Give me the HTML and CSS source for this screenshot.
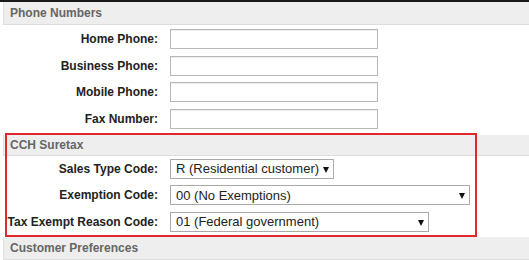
FILE: index.html
```html
<!DOCTYPE html>
<html>
<head>
<meta charset="utf-8">
<link rel="stylesheet" href="styles.css">
</head>
<body>
<div class="page">
  <section class="section">
    <div class="section-head">Phone Numbers</div>
    <div class="rows">
      <label class="label">Home Phone:</label><input class="text-input" type="text">
      <label class="label">Business Phone:</label><input class="text-input" type="text">
      <label class="label">Mobile Phone:</label><input class="text-input" type="text">
      <label class="label">Fax Number:</label><input class="text-input" type="text">
    </div>
  </section>
  <section class="section highlight">
    <div class="section-head compact">CCH Suretax</div>
    <div class="rows rows-select">
      <label class="label">Sales Type Code:</label>
      <span class="select-wrap w-sales"><select class="select"><option>R (Residential customer)</option></select></span>
      <label class="label">Exemption Code:</label>
      <span class="select-wrap w-exempt"><select class="select"><option>00 (No Exemptions)</option></select></span>
      <label class="label">Tax Exempt Reason Code:</label>
      <span class="select-wrap w-reason"><select class="select"><option>01 (Federal government)</option></select></span>
    </div>
  </section>
  <section class="section">
    <div class="section-head">Customer Preferences</div>
  </section>
</div>
</body>
</html>
```

FILE: styles.css
```css
html, body {
  margin: 0;
  background: #fff;
}
body {
  font-family: "Liberation Sans", Arial, sans-serif;
  width: 529px;
  height: 260px;
  overflow: hidden;
}
.page {
  border-top: 2px solid #1a1a1a;
  padding-left: 3px;
}
.section {
  position: relative;
}
.section-head {
  height: 22px;
  line-height: 22px;
  background: #eeeeee;
  border-bottom: 1px solid #dcdcdc;
  border-left: 1px solid #e2e2e2;
  padding-left: 6px;
  font-weight: bold;
  font-size: 12px;
  color: #666;
}
.section-head.compact {
  height: 20px;
  line-height: 20px;
}
.rows {
  display: grid;
  grid-template-columns: 155px auto;
  column-gap: 12px;
  row-gap: 6.5px;
  align-items: center;
  justify-items: start;
  padding: 4px 0 6px;
}
.rows-select {
  padding: 3px 0 5px;
}
.label {
  justify-self: end;
  font-weight: bold;
  font-size: 12px;
  color: #222;
}
.text-input {
  box-sizing: border-box;
  width: 208px;
  height: 20px;
  margin: 0;
  border: 1px solid #b8b8b8;
  box-shadow: inset 0 1px 1px rgba(0,0,0,0.08);
  background: #fff;
  padding: 0 4px;
}
.select-wrap {
  position: relative;
  display: block;
  height: 20px;
}
.select-wrap::after {
  content: "";
  position: absolute;
  right: 5px;
  top: 8px;
  border-left: 3.5px solid transparent;
  border-right: 3.5px solid transparent;
  border-top: 6px solid #111;
  pointer-events: none;
}
.select {
  -webkit-appearance: none;
  appearance: none;
  box-sizing: border-box;
  width: 100%;
  height: 20px;
  margin: 0;
  border: 1px solid #aaa;
  border-radius: 0;
  background: #fff;
  padding: 0 0 0 5px;
  font-family: "Liberation Sans", Arial, sans-serif;
  font-size: 13px;
  color: #222;
}
.w-sales { width: 164px; }
.w-exempt { width: 300px; }
.w-reason { width: 259px; }
.highlight::after {
  content: "";
  position: absolute;
  left: 2px;
  top: -2px;
  width: 472px;
  bottom: 0;
  border: 2px solid #e0282d;
  box-sizing: border-box;
  pointer-events: none;
}
```
